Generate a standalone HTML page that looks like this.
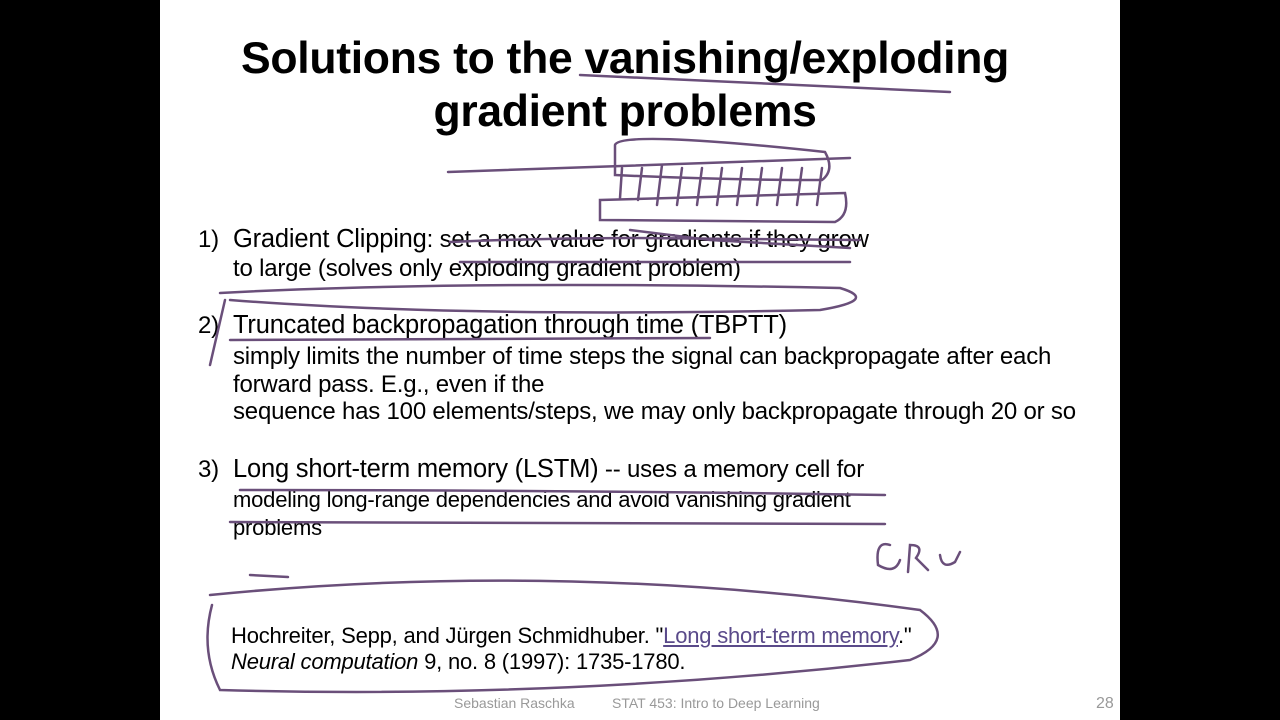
<!DOCTYPE html>
<html><head><style>
body{margin:0;width:1280px;height:720px;background:#000;position:relative;overflow:hidden;font-family:"Liberation Sans",sans-serif;}
#s{position:absolute;left:160px;top:0;width:960px;height:720px;background:#fff;}
.t{position:absolute;left:-15px;width:960px;text-align:center;font-weight:bold;font-size:44.5px;color:#000;letter-spacing:-0.3px}
.b{position:absolute;font-size:24px;color:#000;white-space:nowrap;letter-spacing:-0.2px}
.f{position:absolute;font-size:14px;color:#999;}
svg{position:absolute;left:0;top:0}
</style></head><body>
<div id="s">
<div class="t" style="top:34px">Solutions to the vanishing/exploding</div>
<div class="t" style="top:87px">gradient problems</div>
<div class="b" style="left:38px;top:226px">1)</div>
<div class="b" style="left:73px;top:225px"><span style="font-size:25.5px">Gradient Clipping</span>: set a max value for gradients if they grow</div>
<div class="b" style="left:73px;top:255px">to large (solves only exploding gradient problem)</div>
<div class="b" style="left:38px;top:312px">2)</div>
<div class="b" style="left:73px;top:311px;font-size:25.5px">Truncated backpropagation through time (TBPTT)</div>
<div class="b" style="left:73px;top:343px">simply limits the number of time steps the signal can backpropagate after each</div>
<div class="b" style="left:73px;top:371px">forward pass. E.g., even if the</div>
<div class="b" style="left:73px;top:398px">sequence has 100 elements/steps, we may only backpropagate through 20 or so</div>
<div class="b" style="left:38px;top:456px">3)</div>
<div class="b" style="left:73px;top:455px"><span style="font-size:25.5px">Long short-term memory (LSTM)</span> -- uses a memory cell for</div>
<div class="b" style="left:73px;top:487px;font-size:22px">modeling long-range dependencies and avoid vanishing gradient</div>
<div class="b" style="left:73px;top:515px;font-size:22px">problems</div>
<div class="b" style="left:71px;top:623px;font-size:22px">Hochreiter, Sepp, and Jürgen Schmidhuber. "<span style="color:#5a4a8a;text-decoration:underline">Long short-term memory</span>."</div>
<div class="b" style="left:71px;top:649px;font-size:22px"><i>Neural computation</i> 9, no. 8 (1997): 1735-1780.</div>
<div class="f" style="left:294px;top:695px">Sebastian Raschka</div>
<div class="f" style="left:452px;top:695px">STAT 453: Intro to Deep Learning</div>
<div class="f" style="left:936px;top:695px;font-size:16px">28</div>
<svg width="960" height="720" fill="none" stroke="#6a4f7a" stroke-width="2.5" stroke-linecap="round">
<path d="M420 75 L790 92"/>
<path d="M288 172 L690 158"/>
<path d="M455 145 Q460 130 665 152 Q675 170 662 180 Q560 180 455 175 Z"/>
<path d="M440 200 L685 193 Q690 215 675 222 L440 220 Z"/>
<path d="M462 168 L460 198 M482 168 L478 200 M502 165 L497 205 M522 168 L517 205 M542 168 L537 205 M562 168 L557 205 M582 168 L577 205 M602 168 L597 205 M622 168 L617 205 M642 168 L637 205 M662 168 L657 205"/>
<path d="M470 230 L550 240 L690 248"/>
<path d="M290 242 Q380 238 470 238 L700 240 M300 262 Q500 262 690 262"/>
<path d="M60 293 Q300 280 680 288 Q720 300 660 310 Q300 318 70 300"/>
<path d="M65 300 L50 365"/>
<path d="M70 340 L550 338 M80 490 Q400 490 725 495 M70 522 L725 524 M90 575 L128 577"/>
<path d="M50 595 Q400 560 760 610 Q800 640 750 660 Q400 700 60 690 Q40 650 52 605"/>
<path d="M730 545 Q715 540 718 565 Q735 575 740 560 M748 572 L750 545 Q765 545 756 558 L768 570 M780 555 Q782 570 795 562 L800 552"/>
</svg>
</div>
</body></html>
